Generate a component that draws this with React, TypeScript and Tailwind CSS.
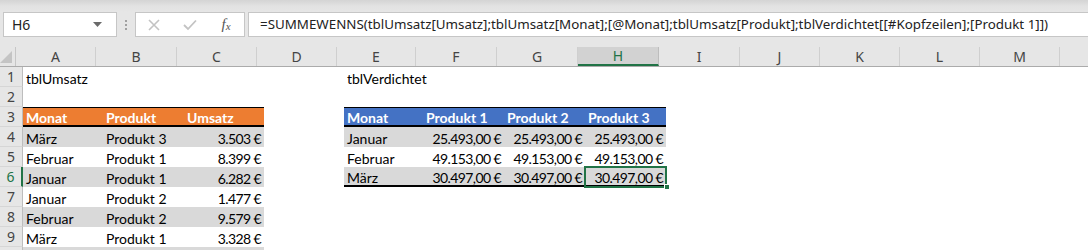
import React from "react";

type Col = { l: string; w: string };
const cols: Col[] = [
  { l: "A", w: "w-[80px]" },
  { l: "B", w: "w-[81px]" },
  { l: "C", w: "w-[80px]" },
  { l: "D", w: "w-[80px]" },
  { l: "E", w: "w-[79px]" },
  { l: "F", w: "w-[81px]" },
  { l: "G", w: "w-[81px]" },
  { l: "H", w: "w-[81px]" },
  { l: "I", w: "w-[81px]" },
  { l: "J", w: "w-[80px]" },
  { l: "K", w: "w-[80px]" },
  { l: "L", w: "w-[80px]" },
  { l: "M", w: "w-[80px]" },
  { l: "", w: "w-[100px]" },
];

type C = { t?: string; cls?: string; right?: boolean };

const OH = "bg-[#ed7d31] text-white font-bold border-t border-t-black border-b-2 border-b-black";
const BH = "bg-[#4472c4] text-white font-bold border-t border-t-black border-b-2 border-b-black";
const G = "bg-[#d9d9d9]";

function row(cells: Record<number, C>): C[] {
  return cols.map((_, i) => cells[i] || {});
}

const rows: { n: number; cells: C[] }[] = [
  { n: 1, cells: row({ 0: { t: "tblUmsatz" }, 4: { t: "tblVerdichtet" } }) },
  { n: 2, cells: row({}) },
  {
    n: 3,
    cells: row({
      0: { t: "Monat", cls: OH },
      1: { t: "Produkt", cls: OH },
      2: { t: "Umsatz", cls: OH },
      4: { t: "Monat", cls: BH },
      5: { t: "Produkt 1", cls: BH },
      6: { t: "Produkt 2", cls: BH },
      7: { t: "Produkt 3", cls: BH },
    }),
  },
  {
    n: 4,
    cells: row({
      0: { t: "März", cls: G },
      1: { t: "Produkt 3", cls: G },
      2: { t: "3.503 €", cls: G, right: true },
      4: { t: "Januar", cls: G },
      5: { t: "25.493,00 €", cls: G, right: true },
      6: { t: "25.493,00 €", cls: G, right: true },
      7: { t: "25.493,00 €", cls: G, right: true },
    }),
  },
  {
    n: 5,
    cells: row({
      0: { t: "Februar" },
      1: { t: "Produkt 1" },
      2: { t: "8.399 €", right: true },
      4: { t: "Februar" },
      5: { t: "49.153,00 €", right: true },
      6: { t: "49.153,00 €", right: true },
      7: { t: "49.153,00 €", right: true },
    }),
  },
  {
    n: 6,
    cells: row({
      0: { t: "Januar", cls: G },
      1: { t: "Produkt 1", cls: G },
      2: { t: "6.282 €", cls: G, right: true },
      4: { t: "März", cls: G + " border-b-2 border-b-black" },
      5: { t: "30.497,00 €", cls: G + " border-b-2 border-b-black", right: true },
      6: { t: "30.497,00 €", cls: G + " border-b-2 border-b-black", right: true },
      7: { t: "30.497,00 €", cls: G + " border-b-2 border-b-black", right: true },
    }),
  },
  {
    n: 7,
    cells: row({
      0: { t: "Januar" },
      1: { t: "Produkt 2" },
      2: { t: "1.477 €", right: true },
    }),
  },
  {
    n: 8,
    cells: row({
      0: { t: "Februar", cls: G },
      1: { t: "Produkt 2", cls: G },
      2: { t: "9.579 €", cls: G, right: true },
    }),
  },
  {
    n: 9,
    cells: row({
      0: { t: "März" },
      1: { t: "Produkt 1" },
      2: { t: "3.328 €", right: true },
    }),
  },
  {
    n: 10,
    cells: row({
      0: { cls: G },
      1: { cls: G },
      2: { cls: G },
    }),
  },
];

const formula =
  "=SUMMEWENNS(tblUmsatz[Umsatz];tblUmsatz[Monat];[@Monat];tblUmsatz[Produkt];tblVerdichtet[[#Kopfzeilen];[Produkt 1]])";

export default function App() {
  return (
    <div className="w-[1088px] h-[250px] overflow-hidden bg-white relative font-['Noto_Sans',sans-serif]">
      {/* Top chrome */}
      <div className="bg-[#e6e6e6] h-[47px] flex flex-col">
        <div className="h-[12px] bg-gradient-to-b from-[#d4d4d4] via-[#e2e2e2] to-[#e6e6e6]" />
        <div className="flex items-stretch h-[25px]">
          {/* Name box */}
          <div className="ml-[3px] w-[114px] bg-white border border-[#c6c6c6] flex items-center justify-between pl-[8px] pr-[14px]">
            <span className="text-[14px] text-[#222] leading-none">H6</span>
            <svg width="9" height="5" viewBox="0 0 9 5">
              <path d="M0 0 H9 L4.5 5 Z" fill="#6a6a6a" />
            </svg>
          </div>
          {/* dots */}
          <div className="w-[18px] flex flex-col items-center justify-center gap-[2px]">
            <span className="block w-[2px] h-[2px] bg-[#a0a0a0]" />
            <span className="block w-[2px] h-[2px] bg-[#a0a0a0]" />
            <span className="block w-[2px] h-[2px] bg-[#a0a0a0]" />
          </div>
          {/* cancel/enter/fx */}
          <div className="w-[110px] bg-white border border-[#c6c6c6] flex items-center">
            <div className="w-[36px] flex justify-center">
              <svg width="12" height="12" viewBox="0 0 12 12">
                <path d="M1 1 L11 11 M11 1 L1 11" stroke="#c3c3c3" strokeWidth="1.6" />
              </svg>
            </div>
            <div className="w-[36px] flex justify-center">
              <svg width="14" height="12" viewBox="0 0 14 12">
                <path d="M1 6 L5 10 L13 1.5" stroke="#c3c3c3" strokeWidth="1.8" fill="none" />
              </svg>
            </div>
            <div className="w-[36px] flex justify-center">
              <span className="font-['Liberation_Serif',serif] italic text-[15px] text-[#555] leading-none">
                f<span className="text-[11px] relative top-[1px]">x</span>
              </span>
            </div>
          </div>
          {/* formula input */}
          <div className="ml-[3px] flex-1 bg-white border border-[#c6c6c6] border-r-0 flex items-center pl-[11px] overflow-hidden">
            <span className="text-[13.35px] text-[#222] whitespace-nowrap">{formula}</span>
          </div>
        </div>
      </div>

      {/* Column header row */}
      <div className="flex h-[20px] bg-[#e6e6e6] border-b border-[#ababab]">
        <div className="w-[23px] h-full border-r border-[#c6c6c6] relative flex items-end justify-end pr-[3px] pb-[3px]">
          <svg width="12" height="12" viewBox="0 0 12 12">
            <path d="M12 0 V12 H0 Z" fill="#c4c4c4" />
          </svg>
        </div>
        {cols.map((c, idx) => {
          const sel = c.l === "H";
          return (
            <div
              key={idx}
              className={`${c.w} shrink-0 h-full flex items-center justify-center text-[14px] border-r ${
                sel
                  ? "bg-[#d2d2d2] text-[#217346] border-r-[#bdbdbd] border-b-2 border-b-[#217346]"
                  : "text-[#444] border-r-[#cfcfcf]"
              }`}
            >
              {c.l}
            </div>
          );
        })}
      </div>

      {/* Rows */}
      <div className="relative">
        {rows.map((r) => (
          <div key={r.n} className="flex h-[20px]">
            <div
              className={`w-[23px] shrink-0 h-full bg-[#e6e6e6] border-b border-b-[#d6d6d6] flex items-center justify-center text-[14px] ${
                r.n === 6
                  ? "text-[#217346] border-r-2 border-r-[#217346]"
                  : "text-[#444] border-r border-r-[#bdbdbd]"
              }`}
            >
              {r.n < 10 ? r.n : ""}
            </div>
            {r.cells.map((c, i) => (
              <div
                key={i}
                className={`${cols[i].w} shrink-0 h-full flex items-center pt-[2px] whitespace-nowrap font-['Lato',sans-serif] text-[14px] text-black ${
                  c.right ? "justify-end pr-[3px] tracking-[-0.6px]" : "justify-start pl-[3px]"
                } ${c.cls || ""}`}
              >
                {c.t}
              </div>
            ))}
          </div>
        ))}
        {/* Selected cell H6 */}
        <div className="absolute left-[584px] top-[99px] w-[83px] h-[22px] border-2 border-[#217346] pointer-events-none" />
        <div className="absolute left-[664px] top-[117px] w-[6px] h-[6px] bg-[#217346] border border-white" />
      </div>
    </div>
  );
}
